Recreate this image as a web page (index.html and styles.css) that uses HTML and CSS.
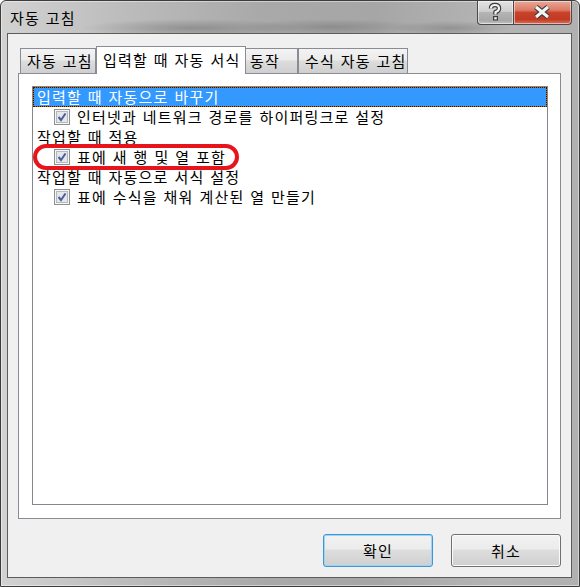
FILE: index.html
```html
<!DOCTYPE html>
<html lang="ko">
<head>
    <meta charset="UTF-8">
    <title>자동 고침</title>
    <link rel="stylesheet" href="styles.css">
</head>
<body>
    <div class="window">
        <div class="titlebar">
            <span class="title">자동 고침</span>
            <div class="caption-btns">
                <div class="cap help">
                    <svg width="36" height="24" viewBox="0 0 36 24">
                        <path d="M14 8.5 Q14 5 18 5 Q22 5 22 8.5 Q22 11 18.5 12 L18.5 14.5" fill="none" stroke="#3c3c3c" stroke-width="4.5" stroke-linejoin="round"/>
                        <rect x="16" y="16" width="5" height="4.5" fill="#3c3c3c"/>
                        <path d="M14 8.5 Q14 5 18 5 Q22 5 22 8.5 Q22 11 18.5 12 L18.5 14.5" fill="none" stroke="#f2f2f2" stroke-width="2.2" stroke-linejoin="round"/>
                        <rect x="17.2" y="17.2" width="2.6" height="2.2" fill="#f2f2f2"/>
                    </svg>
                </div>
                <div class="cap close">
                    <svg width="59" height="24" viewBox="0 0 59 24">
                        <path d="M23 7 L35 17 M23 17 L35 7" stroke="#3a3a3a" stroke-width="5.5"/>
                        <path d="M23 7 L35 17 M23 17 L35 7" stroke="#f4f4f4" stroke-width="3"/>
                    </svg>
                </div>
            </div>
        </div>

        <div class="client">
            <div class="tabs">
                <div class="tab t1">자동 고침</div>
                <div class="tab active">입력할 때 자동 서식</div>
                <div class="tab t3">동작</div>
                <div class="tab t4">수식 자동 고침</div>
            </div>

            <div class="panel">
                <div class="list">
                    <div class="row sel">입력할 때 자동으로 바꾸기</div>
                    <div class="row item">
                        <svg class="chk" width="16" height="16" viewBox="0 0 16 16">
                            <rect x="0.5" y="0.5" width="15" height="15" fill="#f6f6f6" stroke="#8e8f8f"/>
                            <rect x="2.5" y="2.5" width="11" height="11" fill="#e4e6ea" stroke="#b5b9bf"/>
                            <path d="M4.5 8 L7 11 L11.5 4.5" fill="none" stroke="#4a5f97" stroke-width="2"/>
                        </svg>
                        인터넷과 네트워크 경로를 하이퍼링크로 설정
                    </div>
                    <div class="row">작업할 때 적용</div>
                    <div class="row item">
                        <svg class="chk" width="16" height="16" viewBox="0 0 16 16">
                            <rect x="0.5" y="0.5" width="15" height="15" fill="#f6f6f6" stroke="#8e8f8f"/>
                            <rect x="2.5" y="2.5" width="11" height="11" fill="#e4e6ea" stroke="#b5b9bf"/>
                            <path d="M4.5 8 L7 11 L11.5 4.5" fill="none" stroke="#4a5f97" stroke-width="2"/>
                        </svg>
                        표에 새 행 및 열 포함
                    </div>
                    <div class="row">작업할 때 자동으로 서식 설정</div>
                    <div class="row item">
                        <svg class="chk" width="16" height="16" viewBox="0 0 16 16">
                            <rect x="0.5" y="0.5" width="15" height="15" fill="#f6f6f6" stroke="#8e8f8f"/>
                            <rect x="2.5" y="2.5" width="11" height="11" fill="#e4e6ea" stroke="#b5b9bf"/>
                            <path d="M4.5 8 L7 11 L11.5 4.5" fill="none" stroke="#4a5f97" stroke-width="2"/>
                        </svg>
                        표에 수식을 채워 계산된 열 만들기
                    </div>
                    <!-- 빨간 표시 -->
                    <div class="mark"></div>
                </div>
            </div>

            <div class="buttons">
                <button class="btn default">확인</button>
                <button class="btn">취소</button>
            </div>
        </div>
    </div>
</body>
</html>
```

FILE: styles.css
```css
* {
    margin: 0;
    padding: 0;
    box-sizing: border-box;
}

body {
    background: #fff;
    font-family: "Noto Sans CJK KR", sans-serif;
    font-size: 15px;
    letter-spacing: 1.2px;
    word-spacing: 0.4px;
    color: #000;
}

.window {
    width: 580px;
    height: 587px;
    display: flex;
    flex-direction: column;
    border: 1px solid #3c3c3c;
    border-radius: 6px 6px 0 0;
    box-shadow: inset 0 0 0 1px rgba(255, 255, 255, 0.45);
    background:
        radial-gradient(ellipse 110px 9px at 190px 27px, rgba(80, 80, 80, 0.35), transparent),
        radial-gradient(ellipse 90px 8px at 330px 26px, rgba(80, 80, 80, 0.3), transparent),
        radial-gradient(ellipse 60px 7px at 450px 27px, rgba(80, 80, 80, 0.3), transparent),
        linear-gradient(90deg, #d2d2d2 0, #bdbdbd 20%, #a9a9a9 45%, #a6a6a6 65%, #b4b4b4 85%, #b0b0b0 100%);
}

/* 제목 표시줄 */
.titlebar {
    height: 32px;
    display: flex;
    align-items: flex-start;
}

.title {
    padding: 8px 0 0 9px;
    line-height: 18px;
}

.caption-btns {
    margin-left: auto;
    margin-right: 7px;
    display: flex;
}

.cap {
    height: 24px;
    border: 1px solid #4a4a4a;
    border-top: none;
    box-shadow: inset 0 0 0 1px rgba(255, 255, 255, 0.5);
}

.cap svg {
    display: block;
    margin: -1px;
}

.help {
    width: 36px;
    border-right: none;
    border-radius: 0 0 0 4px;
    background: linear-gradient(#e2e2e2, #cfcfcf 45%, #b4b4b4 50%, #a8a8a8 85%, #c4c4c4);
}

.close {
    width: 59px;
    border-radius: 0 0 4px 0;
    background: linear-gradient(#e9a898, #dc7a64 40%, #c8432b 50%, #c23a24 80%, #d8725e);
}

/* 클라이언트 영역 */
.client {
    flex: 1;
    display: flex;
    flex-direction: column;
    margin: 0 7px 8px 6px;
    border: 1px solid #5c5c5c;
    background: #f0f0f0;
    padding: 12px 10px 10px 10px;
}

.tabs {
    height: 27px;
    display: flex;
    align-items: flex-end;
    padding-left: 2px;
}

.tab {
    height: 25px;
    line-height: 24px;
    border: 1px solid #898c95;
    border-bottom: none;
    padding-left: 6px;
    white-space: nowrap;
    background: linear-gradient(#f3f3f3, #ebebeb 45%, #dddddd 50%, #cfcfcf);
}

.t1 {
    width: 76px;
}

.tab.active {
    width: 150px;
    height: 28px;
    line-height: 26px;
    margin-bottom: -1px;
    background: #fff;
    position: relative;
    z-index: 1;
}

.t3 {
    width: 52px;
    border-left: none;
    padding-left: 4px;
}

.t4 {
    width: 110px;
}

.panel {
    flex: 1;
    display: flex;
    background: #fff;
    border: 1px solid #898c95;
    padding: 12px 12px 13px 13px;
}

.list {
    flex: 1;
    position: relative;
    border: 1px solid #828790;
    background: #fff;
}

.row {
    height: 20px;
    line-height: 20px;
    padding-left: 4px;
    white-space: nowrap;
}

.row.sel {
    color: #fff;
    line-height: 18px;
    padding-left: 3px;
    border: 1px dotted #1a1a1a;
    background: linear-gradient(#3399ff, #3399ff) padding-box, linear-gradient(#cc6600, #cc6600) border-box;
}

.row.item {
    display: flex;
    align-items: center;
    padding-left: 21px;
}

.chk {
    flex: none;
    margin-right: 7px;
}

.mark {
    position: absolute;
    left: 0;
    top: 57px;
    width: 206px;
    height: 26px;
    border: 4px solid #e8141c;
    border-radius: 13px;
}

/* 버튼 */
.buttons {
    display: flex;
    justify-content: flex-end;
    gap: 18px;
    margin-top: 15px;
}

.btn {
    width: 110px;
    height: 33px;
    font-family: inherit;
    font-size: 15px;
    letter-spacing: 1.2px;
    color: #000;
    border: 1px solid #707070;
    border-radius: 3px;
    box-shadow: inset 0 0 0 1px #fbfbfb;
    background: linear-gradient(#f2f2f2, #ebebeb 45%, #dddddd 50%, #cfcfcf);
}

.btn.default {
    border-color: #3c96d8;
    box-shadow: inset 0 0 0 1px #9fd5f4;
}
```
